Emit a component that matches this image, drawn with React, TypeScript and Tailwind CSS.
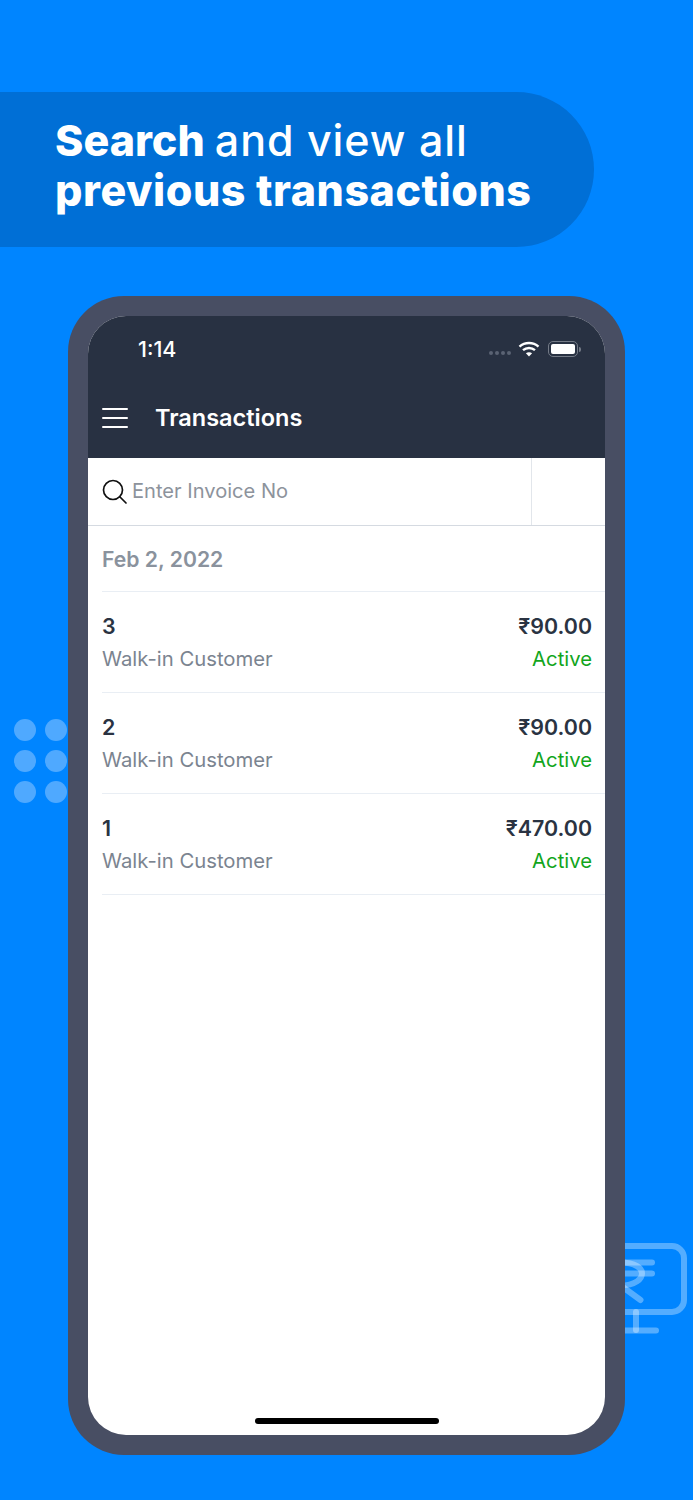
import React from "react";

const rows = [
  { id: "3", amount: "₹90.00" },
  { id: "2", amount: "₹90.00" },
  { id: "1", amount: "₹470.00" },
];

function Row({ id, amount }: { id: string; amount: string }) {
  return (
    <div className="h-[101px] ml-[14px] border-b border-[#e9eef4] pr-[13px] pt-[20px] flex flex-col">
      <div className="flex justify-between items-center h-[28px] text-[21.4px] font-semibold text-[#2a3342]">
        <span>{id}</span>
        <span>{amount}</span>
      </div>
      <div className="flex justify-between items-center h-[28px] mt-[5px] text-[20.3px]">
        <span className="text-[#7b8490]">Walk-in Customer</span>
        <span className="text-[#12a51c]">Active</span>
      </div>
    </div>
  );
}

export default function App() {
  return (
    <div className="relative w-[693px] h-[1500px] overflow-hidden bg-[#0085ff] font-['Inter',sans-serif]">
      <div className="absolute left-0 top-[92px] w-[594px] h-[155px] rounded-r-[78px] bg-[#006fd6] pl-[55px] pt-[23px] text-white text-[43px] leading-[50px]">
        <div>
          <span className="font-extrabold">Search</span>{" "}
          <span className="font-medium tracking-[0.95px] ml-[-2px]">and view all</span>
        </div>
        <div className="font-extrabold tracking-[0.55px]">previous transactions</div>
      </div>

      {/* decorative dots */}
      <div className="absolute left-[14px] top-[719px] grid grid-cols-2 gap-x-[9px] gap-y-[9px]">
        {[0, 1, 2, 3, 4, 5].map((i) => (
          <div key={i} className="w-[22px] h-[22px] rounded-full bg-[#4fa9ff]" />
        ))}
      </div>

      {/* decorative monitor */}
      <svg className="absolute left-[600px] top-[1230px]" width="93" height="120" viewBox="0 0 93 120" fill="none" stroke="#ffffff" strokeOpacity="0.33" strokeWidth="6" strokeLinecap="round" strokeLinejoin="round">
        <path d="M20 16H72a12 12 0 0 1 12 12V70a12 12 0 0 1-12 12H20" />
        <path d="M36 82V100" />
        <path d="M20 100.5H56" />
        <path d="M14 32.5H52" />
        <path d="M14 43.5H52" />
        <path d="M20 32.5c16 0 22 6 22 11s-6 12-22 12" />
        <path d="M20 55L40.5 70" />
      </svg>

      {/* phone */}
      <div className="absolute left-[68px] top-[296px] w-[557px] h-[1159px] rounded-[56px] bg-[#484e63] p-[20px]">
        <div className="relative w-full h-full rounded-[38px] overflow-hidden bg-white flex flex-col">
          <div className="h-[142px] shrink-0 bg-[#283142] relative text-white">
            <div className="flex items-center justify-between pl-[50px] pr-[24px] pt-[19px] h-[47px]">
              <span className="text-[21.5px] font-medium leading-[26px]">1:14</span>
              <div className="flex items-center">
                <div className="flex gap-[2px] mt-[7px] mr-[7px]">
                  {[0, 1, 2, 3].map((i) => (
                    <div key={i} className="w-[4px] h-[4px] rounded-full bg-[#5a6373]" />
                  ))}
                </div>
                <svg width="22" height="16" viewBox="0 0 22 16" className="mr-[8px]" fill="none" stroke="white" strokeWidth="2.4">
                  <path d="M1.5 5.6C6.8 .8 15.2 .8 20.5 5.6" />
                  <path d="M5 9.2c3.4-3 8.6-3 12 0" />
                  <path d="M11 15.5L7.9 12.3c1.8-1.5 4.4-1.5 6.2 0z" fill="white" stroke="none" />
                </svg>
                <div className="w-[30px] h-[16px] rounded-[5px] border border-[#747b87] p-[2px]">
                  <div className="w-full h-full rounded-[2px] bg-white" />
                </div>
                <div className="w-[2px] h-[5px] rounded-r-full bg-[#747b87] ml-[1px]" />
              </div>
            </div>
            <div className="flex items-center h-[50px] mt-[30px] pl-[14px]">
              <div className="w-[26px] flex flex-col gap-[7px]">
                <div className="h-[2px] bg-white rounded-full" />
                <div className="h-[2px] bg-white rounded-full" />
                <div className="h-[2px] bg-white rounded-full" />
              </div>
              <span className="ml-[27px] text-[23.5px] font-semibold">Transactions</span>
            </div>
          </div>

          <div className="flex h-[68px] shrink-0 border-b border-[#d5dae1]">
            <div className="flex-1 flex items-center pl-[14px] border-r border-[#e2e6eb]">
              <svg width="26" height="26" viewBox="0 0 26 26" fill="none" stroke="#111" strokeWidth="1.7" strokeLinecap="round">
                <circle cx="11" cy="11" r="9.5" />
                <path d="M18 18L24 24" />
              </svg>
              <span className="ml-[4px] text-[20.1px] text-[#8d939c]">Enter Invoice No</span>
            </div>
            <div className="w-[73px]" />
          </div>

          <div className="h-[66px] shrink-0 ml-[14px] border-b border-[#e9eef4] flex items-center pt-[3px]">
            <span className="text-[21.2px] font-semibold text-[#8a929d]">Feb 2, 2022</span>
          </div>

          {rows.map((r) => (
            <Row key={r.id} id={r.id} amount={r.amount} />
          ))}

          <div className="absolute left-[167px] bottom-[11px] w-[184px] h-[6px] rounded-full bg-black" />
        </div>
      </div>
    </div>
  );
}
